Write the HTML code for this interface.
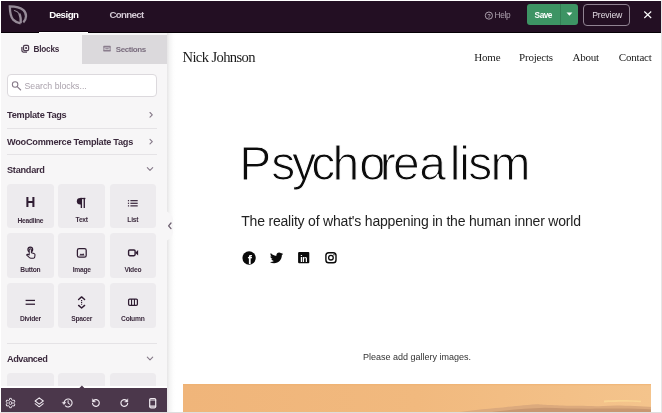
<!DOCTYPE html>
<html lang="en">
<head>
<meta charset="utf-8">
<title>SeedProd Builder</title>
<style>
*{box-sizing:border-box;margin:0;padding:0}
html,body{width:662px;height:413px;overflow:hidden;background:#fff}
body{font-family:"Liberation Sans",sans-serif;color:#3c2b3e;position:relative}
#root{position:absolute;left:0;top:0;width:662px;height:413px;overflow:hidden;will-change:transform}
.abs{position:absolute}
#frame{position:absolute;left:0;top:0;width:662px;height:413px;border-top:1px solid #fff;border-left:1px solid #fff;border-right:1px solid #e6e6e6;border-bottom:1px solid #dedede;pointer-events:none;z-index:50}
/* top bar */
#topbar{position:absolute;left:1px;top:1px;width:660px;height:32.3px;background:#230f23;border-bottom:1.3px solid #060006}
.tt{position:absolute;white-space:nowrap;line-height:12px;font-weight:bold;color:#fff}
#underline{position:absolute;left:39px;top:31.7px;width:49px;height:2.2px;background:#fff;box-shadow:0 -1px 0 #0d000d}
/* sidebar */
#sidebar{position:absolute;left:1px;top:33px;width:166px;height:355px;background:#f7f6f7;overflow:hidden}
#shadow{position:absolute;left:167px;top:33px;width:9px;height:379px;background:linear-gradient(to right,#e6e5e6,#f4f4f4 30%,#fdfdfd 70%,#fff)}
#handle{position:absolute;left:160px;top:211px;width:13px;height:30px;background:#f7f6f7;border-radius:0 9px 9px 0}
#t-sections{position:absolute;left:80.8px;top:1.7px;width:85.2px;height:29.3px;background:#dbd9dc}
.st{position:absolute;white-space:nowrap;font-weight:bold;line-height:10px;font-size:8.2px}
#search{position:absolute;left:6px;top:41px;width:150px;height:23px;background:#fff;border:1px solid #dcd9dd;border-radius:4px}
.sec{position:absolute;left:6px;font-size:9.2px;letter-spacing:-0.27px;font-weight:bold;color:#3c2b3e;white-space:nowrap;line-height:12px}
.hr{position:absolute;left:6px;width:150px;height:1px;background:#e5e3e6}
.tile{position:absolute;width:46.8px;height:44.8px;background:#edebee;border-radius:3.5px}
.lb{position:absolute;width:60px;margin-left:-30px;text-align:center;font-size:6.7px;letter-spacing:-0.25px;font-weight:bold;color:#3c2b3e;line-height:9px;white-space:nowrap}
/* bottom bar */
#bottombar{position:absolute;left:1px;top:388px;width:166px;height:24px;background:#4b374b}
/* preview */
.nav{position:absolute;font-family:"Liberation Serif",serif;font-size:11px;line-height:14px;letter-spacing:-0.2px;color:#1b1b1b;white-space:nowrap}
#sub{position:absolute;left:241.2px;top:211.5px;font-size:14px;line-height:18px;color:#222;white-space:nowrap;letter-spacing:-0.195px}
#gal{position:absolute;left:300px;width:234px;top:350.5px;text-align:center;font-size:9px;line-height:12px;color:#333;white-space:nowrap}
#img{position:absolute;left:183px;top:384px;width:468px;height:28px;background:linear-gradient(to right,#f0b57a 0,#f1b97e 50%,#f4c48c 100%);overflow:hidden}
</style>
</head>
<body>
<div id="root">
<div id="topbar"></div>
<div id="underline"></div>
<div class="tt" style="left:49.2px;top:8.6px;font-size:9.7px;letter-spacing:-0.5px">Design</div>
<div class="tt" style="left:109.5px;top:8.6px;font-size:9.7px;letter-spacing:-0.68px;color:#d3c9d4">Connect</div>
<div class="tt" style="left:494.5px;top:9px;font-size:8.3px;font-weight:normal;color:#aca0ad;letter-spacing:-0.28px">Help</div>
<div class="abs" style="left:527px;top:4px;width:51px;height:21px;background:#3d9464;border-radius:3px"></div>
<div class="abs" style="left:560px;top:4px;width:1px;height:21px;background:#337e54"></div>
<div class="tt" style="left:534.6px;top:9px;font-size:8.3px;letter-spacing:-0.5px">Save</div>
<div class="abs" style="left:583px;top:3.5px;width:46.5px;height:22px;border:1.25px solid #908392;border-radius:4px"></div>
<div class="tt" style="left:592.2px;top:9px;font-size:8.7px;letter-spacing:-0.12px;font-weight:normal;color:#e2dbe3">Preview</div>

<div id="shadow"></div>
<div id="handle"></div>
<div id="sidebar">
  <div id="t-sections"></div>
  <div class="st" style="left:32.5px;top:12px;color:#3c2b3e;letter-spacing:-0.2px">Blocks</div>
  <div class="st" style="left:114.8px;top:12px;color:#7a6d7e;letter-spacing:-0.42px;font-size:8px">Sections</div>
  <div id="search"></div>
  <div class="abs" style="left:23.5px;top:47px;font-size:8.75px;line-height:12px;color:#aaa2ac;white-space:nowrap">Search blocks...</div>
  <div class="sec" style="top:76px">Template Tags</div>
  <div class="hr" style="top:95px"></div>
  <div class="sec" style="top:102.5px">WooCommerce Template Tags</div>
  <div class="hr" style="top:121px"></div>
  <div class="sec" style="top:130.5px">Standard</div>

  <div class="tile" style="left:6.2px;top:150.7px"></div>
  <div class="tile" style="left:57.2px;top:150.7px"></div>
  <div class="tile" style="left:108.6px;top:150.7px"></div>
  <div class="tile" style="left:6.2px;top:200.2px"></div>
  <div class="tile" style="left:57.2px;top:200.2px"></div>
  <div class="tile" style="left:108.6px;top:200.2px"></div>
  <div class="tile" style="left:6.2px;top:249.8px"></div>
  <div class="tile" style="left:57.2px;top:249.8px"></div>
  <div class="tile" style="left:108.6px;top:249.8px"></div>

  <div class="lb" style="left:29.4px;top:183.1px">Headline</div>
  <div class="lb" style="left:80.7px;top:182px">Text</div>
  <div class="lb" style="left:131.8px;top:182px">List</div>
  <div class="lb" style="left:29.4px;top:232.2px">Button</div>
  <div class="lb" style="left:80.7px;top:232.2px">Image</div>
  <div class="lb" style="left:131.8px;top:232.2px">Video</div>
  <div class="lb" style="left:29.4px;top:281.4px">Divider</div>
  <div class="lb" style="left:80.7px;top:281.4px">Spacer</div>
  <div class="lb" style="left:131.8px;top:281.4px">Column</div>

  <div class="hr" style="top:310.4px"></div>
  <div class="sec" style="top:319.5px;letter-spacing:-0.45px">Advanced</div>
  <div class="tile" style="left:6.2px;top:339.8px"></div>
  <div class="tile" style="left:57.2px;top:339.8px"></div>
  <div class="tile" style="left:108.6px;top:339.8px"></div>
  <div class="abs" style="left:0;top:353.4px;width:166px;height:1.6px;background:#fff"></div>
</div>
<div id="bottombar"></div>

<div class="nav" style="left:182.5px;top:48px;font-size:14.6px;line-height:18px;letter-spacing:-0.62px">Nick Johnson</div>
<div class="nav" style="left:474.3px;top:49.5px">Home</div>
<div class="nav" style="left:519px;top:49.5px">Projects</div>
<div class="nav" style="left:572.4px;top:49.5px">About</div>
<div class="nav" style="left:618.8px;top:49.5px">Contact</div>
<div id="sub">The reality of what's happening in the human inner world</div>
<div id="gal">Please add gallery images.</div>
<div id="img">
<svg class="abs" style="left:0;top:0" width="468" height="28" viewBox="0 0 468 28">
    <defs><filter id="bl" x="-5%" y="-50%" width="110%" height="200%"><feGaussianBlur stdDeviation="0.7"/></filter></defs>
    <rect x="0" y="0" width="468" height="1.2" fill="#eeb070" opacity="0.6"/>
    <g filter="url(#bl)">
      <path d="M421 16.6 C432 15.8 446 15.8 458 16.8 L458 18.2 C446 17.6 432 17.8 421 18.4 Z" fill="#fad795" opacity="0.85"/>
      <path d="M268 29 C285 26.5 300 25 320 23.4 C330 22.4 340 21 354 20.2 C362 20.6 372 21.6 395 21.8 C405 22 412 22.4 420 22 C430 21 440 21.4 452 22 L470 23 L470 29 Z" fill="#dcaa7d"/>
      <path d="M300 29 C320 26.5 340 24.4 362 23.8 C380 24.4 400 25 420 24.6 C440 24.2 455 24.6 470 25.4 L470 29 Z" fill="#c8976f"/>
    </g>
  </svg>
</div>

<!-- icon overlay in page coordinates -->
<svg class="abs" style="left:0;top:0;z-index:10" width="662" height="413" viewBox="0 0 662 413">
  <!-- logo -->
  <g fill="none" stroke="#968b98" stroke-linejoin="miter" stroke-linecap="butt">
    <path d="M20.6 23.3 C17.6 22.8 15 21.6 13.1 19.6 C10.2 16.4 9.9 11.4 9.8 6.3 C15.2 6.3 20.3 7.3 23.4 10.2 C25.3 12 26.1 14 26 16.2 C25.9 18.8 25 20.9 23.3 22.4" stroke-width="2.3" stroke-miterlimit="6"/>
    <path d="M14.4 10.5 C16.6 11.1 18.4 12.4 19.5 14.2" stroke-width="1.1" stroke-linecap="round"/>
    <path d="M19.4 13.8 C20.6 16.2 20.9 19.5 20.7 23.2" stroke-width="2.3"/>
  </g>
  <!-- help icon -->
  <circle cx="488.9" cy="15.6" r="3.6" fill="none" stroke="#aca0ad" stroke-width="1"/>
  <text x="488.9" y="17.7" font-size="5.8" font-weight="bold" text-anchor="middle" fill="#aca0ad" font-family="Liberation Sans, sans-serif">?</text>
  <!-- save caret -->
  <path d="M566.5 12.6 H572.4 L569.45 15.8 Z" fill="#fff"/>
  <!-- close X -->
  <path d="M644.3 11.5 L651.2 18 M651.2 11.5 L644.3 18" stroke="#fff" stroke-width="1.1" fill="none"/>
  <!-- blocks tab icon -->
  <g fill="none" stroke="#4d3d50" stroke-width="1.25">
    <rect x="23.5" y="45.4" width="5.1" height="5.1" rx="1.3"/>
    <path d="M21.9 47 V50.6 Q21.9 52 23.3 52 H27"/>
  </g>
  <rect x="25.2" y="47.1" width="1.8" height="1.8" fill="#4d3d50"/>
  <!-- sections tab icon -->
  <g fill="#8a7d8d">
    <rect x="103.4" y="45.8" width="7.2" height="1.6" rx="0.5"/>
    <rect x="103.4" y="50" width="7.2" height="1.6" rx="0.5"/>
    <rect x="103.4" y="46.5" width="1" height="4.5"/>
    <rect x="109.6" y="46.5" width="1" height="4.5"/>
    <rect x="105.3" y="48.2" width="3.4" height="1.1"/>
  </g>
  <!-- search icon -->
  <g fill="none" stroke="#857887" stroke-width="1.05" stroke-linecap="round">
    <circle cx="15.1" cy="84.4" r="2.75"/>
    <path d="M17.2 86.6 L20.7 90"/>
  </g>
  <!-- chevrons -->
  <g fill="none" stroke="#857988" stroke-width="1.1" stroke-linecap="round" stroke-linejoin="round">
    <path d="M150 112.5 L152.3 114.8 L150 117.1"/>
    <path d="M150 139.3 L152.3 141.6 L150 143.9"/>
    <path d="M147.3 167.7 L150 170.4 L152.7 167.7"/>
    <path d="M147.3 357.2 L150 359.9 L152.7 357.2"/>
    <path d="M171 223 L168.6 225.8 L171 228.6" stroke="#6d6070" stroke-width="1.3"/>
  </g>
  <!-- tile icons -->
  <g fill="none" stroke="#2f1c32">
    <path d="M27.4 197.1 V206.9 M33.4 197.1 V206.9 M27.4 201.9 H33.4" stroke-width="2.05"/>
    <!-- image -->
    <rect x="77.4" y="248.5" width="8.8" height="8.7" rx="1.7" stroke-width="1.25"/>
    <!-- video -->
    <rect x="128.6" y="250" width="6.5" height="5.7" rx="1.1" stroke-width="1.4"/>
    <!-- column -->
    <rect x="128.6" y="299" width="8.8" height="6.3" rx="1.1" stroke-width="1.25"/>
    <path d="M131.55 299 V305.3 M134.45 299 V305.3" stroke-width="1.1"/>
    <!-- spacer -->
    <path d="M78.6 299.5 L81.6 296.9 L84.6 299.5 M78.6 305.4 L81.6 308 L84.6 305.4" stroke-width="1.4" stroke-linecap="round" stroke-linejoin="round"/>
    <path d="M81.6 300.1 V304.9" stroke-width="1.15" stroke-dasharray="1.05 0.75"/>
    <!-- button (touch) -->
    <circle cx="30.3" cy="249.5" r="2.35" stroke-width="1.25"/>
    <path d="M29.2 249.7 Q29.2 248.7 30.3 248.7 Q31.4 248.7 31.4 249.7 V252.7 L33.9 253.4 Q35.1 253.8 35 254.9 L34.7 257.2 Q34.5 258.2 33.5 258.2 H30.9 Q30.1 258.2 29.5 257.7 L26.7 255.2 Q26.7 254.2 27.8 254.3 L29.2 254.9 Z" fill="#edebee" stroke-width="1.05" stroke-linejoin="round"/>
  </g>
  <g fill="#2f1c32">
    <!-- pilcrow -->
    <path d="M81.9 197.9 H80.1 A3.25 3.25 0 0 0 80.1 204.4 H81.9 Z"/>
    <rect x="80.7" y="197.9" width="1.35" height="10.1"/>
    <rect x="83.6" y="197.9" width="1.35" height="10.1"/>
    <rect x="80" y="197.9" width="5.4" height="1.25"/>
    <!-- list -->
    <rect x="127.9" y="200.1" width="1.2" height="1.15"/><rect x="130.4" y="200.1" width="7.3" height="1.15"/>
    <rect x="127.9" y="202.7" width="1.2" height="1.15"/><rect x="130.4" y="202.7" width="7.3" height="1.15"/>
    <rect x="127.9" y="205.3" width="1.2" height="1.15"/><rect x="130.4" y="205.3" width="7.3" height="1.15"/>
    <!-- image mountains -->
    <path d="M79.3 255.4 L80.9 253.5 L82 254.6 L83.2 253.2 L84.6 255.4 Z"/>
    <!-- video triangle -->
    <path d="M135.2 252.85 L138.1 250.1 V255.6 Z"/>
    <!-- divider -->
    <rect x="25.6" y="299.8" width="9.4" height="1.25"/>
    <rect x="25.6" y="303.6" width="9.4" height="1.25"/>
    <!-- up caret above bottom bar -->
    <path d="M79.2 388.2 L81.9 385.4 L84.6 388.2 Z" fill="#4b374b"/>
  </g>
  <!-- bottom bar icons -->
  <g fill="none" stroke="#efe9f0" stroke-width="1.05" stroke-linecap="round" stroke-linejoin="round">
    <!-- gear -->
    <path d="M9.46 399.66 L9.68 398.37 L11.32 398.37 L11.54 399.66 L12.92 400.45 L14.14 400.00 L14.96 401.43 L13.96 402.25 L13.96 403.85 L14.96 404.67 L14.14 406.10 L12.92 405.65 L11.54 406.44 L11.32 407.73 L9.68 407.73 L9.46 406.44 L8.08 405.65 L6.86 406.10 L6.04 404.67 L7.04 403.85 L7.04 402.25 L6.04 401.43 L6.86 400.00 L8.08 400.45 Z" stroke-width="0.95"/>
    <circle cx="10.5" cy="403.05" r="1.5" stroke-width="0.9"/>
    <!-- layers -->
    <path d="M39.2 397.9 L43.3 401 L39.2 404.1 L35.1 401 Z"/>
    <path d="M35.1 403.7 L39.2 406.8 L43.3 403.7"/>
    <!-- history -->
    <path d="M64.1 403 A4 4 0 1 1 65.4 405.9" stroke-width="1.1"/>
    <path d="M62.4 402.3 H65.8 L64.1 404.4 Z" fill="#efe9f0" stroke-width="0.4"/>
    <path d="M68.1 400.7 V403.2 L69.9 404.3" stroke-width="1"/>
    <!-- undo -->
    <path d="M93.6 400.5 A3.4 3.4 0 1 1 92.5 403.3" stroke-width="1.15"/>
    <path d="M92.4 399.1 V402 H95.3 Z" fill="#efe9f0" stroke-width="0.4"/>
    <!-- redo -->
    <path d="M126.6 400.5 A3.4 3.4 0 1 0 127.7 403.3" stroke-width="1.15"/>
    <path d="M127.8 399.1 V402 H124.9 Z" fill="#efe9f0" stroke-width="0.4"/>
    <!-- mobile -->
    <rect x="149.7" y="398.5" width="6" height="9.3" rx="1.2" stroke-width="1.2"/>
    <path d="M149.7 400 H155.7 M149.7 406.1 H155.7" stroke-width="1.1"/>
  </g>
  <!-- heading -->
  <text id="h1" x="239.2 271.3 292 311.3 332.6 359.3 379.7 393 419.2 449.7 459.2 468.2 490.6" y="179.5" font-size="48" fill="#0c0c0c" stroke="#fff" stroke-width="1.05" font-family="Liberation Sans, sans-serif">Psychorealism</text>
  <!-- social icons -->
  <circle cx="249.1" cy="258" r="6.65" fill="#0a0a0a"/>
  <text x="249.9" y="264.4" font-size="12.5" font-weight="bold" text-anchor="middle" fill="#fff" font-family="Liberation Sans, sans-serif">f</text>
  <path transform="translate(269.9 251.2) scale(0.02598)" fill="#0a0a0a" d="M459.37 151.716c.325 4.548.325 9.097.325 13.645 0 138.72-105.583 298.558-298.558 298.558-59.452 0-114.68-17.219-161.137-47.106 8.447.974 16.568 1.299 25.34 1.299 49.055 0 94.213-16.568 130.274-44.832-46.132-.975-84.792-31.188-98.112-72.772 6.498.974 12.995 1.624 19.818 1.624 9.421 0 18.843-1.3 27.614-3.573-48.081-9.747-84.143-51.98-84.143-102.985v-1.299c13.969 7.797 30.214 12.67 47.431 13.319-28.264-18.843-46.781-51.005-46.781-87.391 0-19.492 5.197-37.36 14.294-52.954 51.655 63.675 129.3 105.258 216.365 109.807-1.624-7.797-2.599-15.918-2.599-24.04 0-57.828 46.782-104.934 104.934-104.934 30.213 0 57.502 12.67 76.67 33.137 23.715-4.548 46.456-13.32 66.599-25.34-7.798 24.366-24.366 44.833-46.132 57.827 21.117-2.273 41.584-8.122 60.426-16.243-14.292 20.791-32.161 39.308-52.628 54.253z"/>
  <rect x="298.1" y="252" width="11.2" height="11.3" rx="1" fill="#0a0a0a"/>
  <text x="303.75" y="261.6" font-size="8.6" font-weight="bold" text-anchor="middle" fill="#fff" font-family="Liberation Sans, sans-serif" letter-spacing="-0.2">in</text>
  <rect x="325.9" y="252.7" width="10.1" height="10" rx="2.8" fill="none" stroke="#0a0a0a" stroke-width="1.4"/>
  <circle cx="330.95" cy="257.7" r="2.3" fill="none" stroke="#0a0a0a" stroke-width="1.3"/>
  <circle cx="334" cy="254.7" r="0.7" fill="#0a0a0a"/>
</svg>
<div id="frame"></div>
</div>
</body>
</html>
